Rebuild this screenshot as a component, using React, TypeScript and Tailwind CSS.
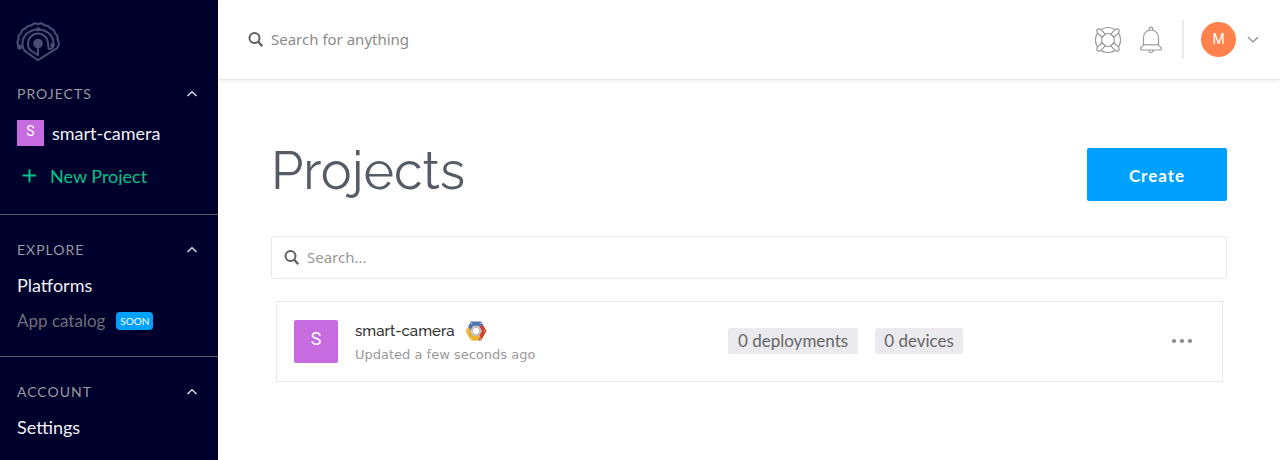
import type { ReactNode } from 'react';

function Logo() {
  return (
    <svg viewBox="0 0 44 40" className="h-10 w-11 text-[#4c4c72]" fill="none" stroke="currentColor" strokeWidth="2" strokeLinejoin="round" strokeLinecap="round" aria-hidden="true">
      <path d="M3 24.500 Q0 20.500 2.600 17.500 Q1.500 13.500 5 11.500 Q5.500 7.500 9.500 6.500 Q11.500 3 15.200 3.500 Q18.500 0 22 2.200 Q25.500 0 28.800 3.500 Q32.500 3 34.500 6.500 Q38.500 7.500 39 11.500 Q42.500 13.500 41.400 17.500 Q44 20.500 42 24.500 Q41.500 26.200 39.500 27.200 L22 38.200 L9.500 29.500 Q6.500 27 6.500 21.500 A15.500 14 0 0 1 37.500 21.500 V24 Q35.500 28 32.500 26.500 L32 21.500 A10 10 0 0 0 12 21.500 Q12 27 15.500 29 L22 33 V22" />
      <circle cx="22" cy="21.500" r="4.800" fill="currentColor" stroke="none" />
      <circle cx="3.500" cy="25" r="2.500" fill="currentColor" stroke="none" />
      <circle cx="22" cy="7.300" r="2.100" fill="currentColor" stroke="none" />
      <circle cx="36.500" cy="23" r="2.200" fill="currentColor" stroke="none" />
    </svg>
  );
}

function Chevron({ up = false, className }: { up?: boolean; className: string }) {
  return (
    <svg viewBox="0 0 12 8" className={className} fill="none" stroke="currentColor" strokeWidth="1.500" aria-hidden="true">
      <path d={up ? 'M1.500 6 L6 1.800 L10.500 6' : 'M1 1 L6 6 L11 1'} />
    </svg>
  );
}

function SearchIcon() {
  return (
    <svg viewBox="0 0 16 16" className="size-4 shrink-0 text-[#5f5f5f]" fill="none" stroke="currentColor" strokeWidth="2" aria-hidden="true">
      <circle cx="6.500" cy="6" r="5" />
      <path d="M10 9.500 L14.300 14.200" strokeWidth="2.300" />
    </svg>
  );
}

function LifeBuoy() {
  return (
    <svg viewBox="0 0 28 28" className="size-7" fill="none" stroke="currentColor" strokeWidth="1.200" aria-hidden="true">
      <circle cx="14" cy="14" r="12.500" />
      <circle cx="14" cy="14" r="6.500" />
      {[0, 90, 180, 270].map((angle) => (
        <g key={angle} transform={`rotate(${angle} 14 14)`}>
          <path d="M3.300 6.700 L2.800 4.500 Q2.800 2.800 4.500 2.800 L6.700 3.300 L11.200 8.200 L8.200 11.200 Z" fill="white" />
        </g>
      ))}
    </svg>
  );
}

function Bell() {
  return (
    <svg viewBox="0 0 24 28" className="h-7 w-6" fill="none" stroke="currentColor" strokeWidth="1.200" strokeLinejoin="round" aria-hidden="true">
      <path d="M10.200 4.200 V3 A1.800 1.800 0 0 1 13.800 3 V4.200" />
      <path d="M4.500 18.500 V11.500 A7.500 7.500 0 0 1 19.500 11.500 V18.500 Q19.500 20 22 21.300 Q23 24 21 24 H3 Q1 24 2 21.300 Q4.500 20 4.500 18.500 Z" />
      <path d="M4.500 18.800 H19.500" />
      <path d="M9.800 24 Q10 26.500 12 26.500 Q14 26.500 14.200 24" />
    </svg>
  );
}

function CloudHexagon() {
  return (
    <svg viewBox="0 0 22 20" className="h-5 w-[22px]" role="img" aria-label="Google Cloud">
      <path d="M6 .500 H16 L19 6 L14.500 8 L11 5 L6.500 8 L5.500 11.500 L3 6 Z" fill="#4f74b3" />
      <path d="M18 4 L21.500 10 L16 19.500 H13.500 L12.500 15 L16 10 L14.500 6 Z" fill="#d0432f" />
      <path d="M3.500 5.500 L.500 10 L6 19.500 H13.500 L15.500 15 L8 14 Z" fill="#eab02f" />
      <path d="M8 4.800 H14 L17 10 L14 15.200 H8 L5 10 Z" fill="#c5c5bd" />
      <circle cx="11" cy="10" r="3" fill="#fff" />
      <g fill="#fff">
        <circle cx="6.700" cy="2.500" r=".600" />
        <circle cx="15.300" cy="2.500" r=".600" />
        <circle cx="2.500" cy="10" r=".600" />
        <circle cx="19.500" cy="10" r=".600" />
        <circle cx="6.700" cy="17.800" r=".600" />
        <circle cx="15.300" cy="17.800" r=".600" />
      </g>
    </svg>
  );
}

function Section({ title, className = '', children }: { title: string; className?: string; children: ReactNode }) {
  return (
    <section className={className}>
      <button type="button" aria-expanded="true" className="flex h-5 w-full items-center justify-between pr-5 pl-[17px] text-sm tracking-[1px] text-[#9a9a9e]">
        {title}
        <Chevron up className="h-2 w-3 text-[#dcdce2]" />
      </button>
      {children}
    </section>
  );
}

function Sidebar() {
  return (
    <nav className="w-[218px] shrink-0 bg-[#00002d] font-[Lato,sans-serif] text-lg text-[#f2f2f5]">
      <a href="#home" aria-label="Home" className="mx-4 mt-[22px] mb-[22px] block w-11">
        <Logo />
      </a>
      <Section title="PROJECTS" className="pb-[29px]">
        <a href="#smart-camera" className="mt-4 flex items-start gap-2 pl-[17px] leading-[27px]">
          <span className="flex h-[26px] w-[27px] items-center justify-center bg-[#c66be0] pb-1 font-[Roboto,sans-serif] text-sm text-white">S</span>
          smart-camera
        </a>
        <button type="button" className="mt-5 flex items-center gap-[14px] pl-[22px] text-[#00c389]">
          <svg viewBox="0 0 14 14" className="size-[14px]" stroke="currentColor" strokeWidth="2" strokeLinecap="round" aria-hidden="true">
            <path d="M7.500 1 V12.500 M1.500 6.500 H13.500" />
          </svg>
          <span className="overflow-hidden leading-[18px]">New Project</span>
        </button>
      </Section>
      <Section title="EXPLORE" className="border-t border-[#5c5c68] pt-[25px] pb-[27px]">
        <a href="#platforms" className="mt-[13px] block pl-[17px] leading-6">Platforms</a>
        <div className="mt-[14px] flex items-center gap-[11px] pl-[17px]">
          <span className="overflow-hidden pt-px text-[17px] leading-[18px] text-[#6e6e74]">App catalog</span>
          <span className="rounded bg-[#00a0ff] px-1 text-[10px] leading-[18px] text-white">SOON</span>
        </div>
      </Section>
      <Section title="ACCOUNT" className="-mt-px border-t border-[#5c5c68] pt-[25px]">
        <a href="#settings" className="mt-[13px] block pl-[17px] leading-6">Settings</a>
      </Section>
    </nav>
  );
}

function TopBar() {
  return (
    <header className="flex h-20 items-center border-b border-[#e9e9ec] pr-[21px] pl-[30px] shadow-[0_1px_4px_rgba(0,0,0,0.07)]">
      <label className="flex flex-1 items-center gap-[7px]">
        <SearchIcon />
        <input type="search" aria-label="Search for anything" placeholder="Search for anything" className="w-full bg-transparent font-['Noto_Sans',sans-serif] text-[15px] outline-none placeholder:text-[#8b8b8b]" />
      </label>
      <div className="flex items-center text-[#999]">
        <button type="button" aria-label="Help"><LifeBuoy /></button>
        <button type="button" aria-label="Notifications" className="ml-[17px]"><Bell /></button>
        <span className="ml-[19px] h-[39px] w-[2px] bg-[#e9e9ee]" />
        <button type="button" aria-label="Account menu" className="ml-[17px] flex items-center gap-[11px]">
          <span className="flex size-[35px] items-center justify-center rounded-full bg-[#ff824c] pb-[2px] font-[Roboto,sans-serif] text-sm text-white">M</span>
          <Chevron className="h-2 w-3" />
        </button>
      </div>
    </header>
  );
}

function ProjectCard() {
  return (
    <article className="mt-[22px] mr-1 ml-[5px] flex h-[81px] items-center border border-[#e9e9ea] px-[17px] pb-px">
      <span className="flex h-[43px] w-11 items-center justify-center rounded-xs bg-[#c66be0] pb-1 font-[Roboto,sans-serif] text-lg text-white">S</span>
      <div className="ml-[17px] w-[373px] pt-[3px]">
        <div className="flex items-center gap-[10px]">
          <a href="#smart-camera" className="font-[Raleway,sans-serif] text-[15px] leading-6 font-medium text-[#333]">smart-camera</a>
          <CloudHexagon />
        </div>
        <p className="font-['DejaVu_Sans',sans-serif] text-[13px] leading-6 text-[#999]">Updated a few seconds ago</p>
      </div>
      <div className="flex flex-1 gap-[17px] font-[Lato,sans-serif] text-[17px] leading-[26px] text-[#666]">
        <span className="rounded-xs bg-[#ebebef] px-[10px]">0 deployments</span>
        <span className="rounded-xs bg-[#ebebef] px-[9px]">0 devices</span>
      </div>
      <button type="button" aria-label="Project options" className="mr-3 text-[#8c8c8c]">
        <svg viewBox="0 0 22 6" className="h-[6px] w-[22px]" fill="currentColor" aria-hidden="true">
          <circle cx="3" cy="3" r="2.100" />
          <circle cx="11" cy="3" r="2.100" />
          <circle cx="19" cy="3" r="2.100" />
        </svg>
      </button>
    </article>
  );
}

export default function App() {
  return (
    <div className="flex min-h-screen bg-white">
      <Sidebar />
      <div className="min-w-0 flex-1">
        <TopBar />
        <main className="px-[53px] pt-[68px]">
          <div className="flex items-start justify-between">
            <h1 className="font-[Raleway,sans-serif] text-[52px] leading-[46px] font-normal text-[#555c66]">Projects</h1>
            <button type="button" className="h-[53px] w-[140px] rounded-xs bg-[#00a0ff] pt-[2px] font-[Lato,sans-serif] text-[17px] font-bold tracking-[1px] text-white">Create</button>
          </div>
          <label className="mt-[35px] flex h-[43px] items-center gap-[7px] rounded-xs border border-[#e9e9ea] px-3">
            <SearchIcon />
            <input type="search" aria-label="Search projects" placeholder="Search..." className="w-full bg-transparent font-['Noto_Sans',sans-serif] text-[15px] outline-none placeholder:text-[#999]" />
          </label>
          <ProjectCard />
        </main>
      </div>
    </div>
  );
}
